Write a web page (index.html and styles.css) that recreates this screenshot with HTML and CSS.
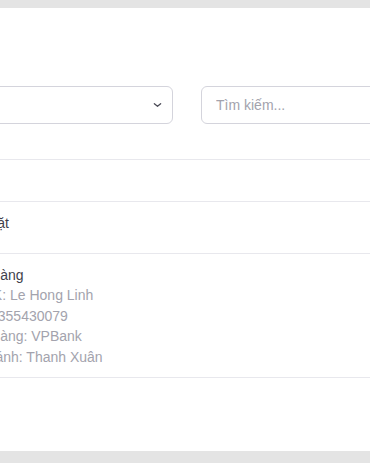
FILE: index.html
```html
<!DOCTYPE html>
<html lang="vi">
<head>
    <meta charset="UTF-8">
    <meta name="viewport" content="width=device-width, initial-scale=1.0">
    <title>Phương thức thanh toán</title>
    <link rel="stylesheet" href="styles.css">
</head>
<body>
    <div class="page">
        <div class="card">
            <div class="filters">
                <div class="select">
                    <span class="select-value">Tất cả phương thức</span>
                    <svg class="chevron" viewBox="0 0 10 6" width="9" height="6">
                        <path d="M1.5 1.5l3.5 3 3.5-3" />
                    </svg>
                </div>
                <input class="search" type="text" placeholder="Tìm kiếm...">
            </div>

            <div class="table">
                <div class="row row-head">
                    <div class="cell">#</div>
                    <div class="cell">Tên</div>
                </div>
                <div class="row row-short">
                    <div class="cell">1</div>
                    <div class="cell">
                        <div class="title">Tiền mặt</div>
                    </div>
                </div>
                <div class="row">
                    <div class="cell">2</div>
                    <div class="cell">
                        <div class="title">Ngân hàng</div>
                        <div class="detail">Chủ TK: Le Hong Linh</div>
                        <div class="detail">STK: 0355430079</div>
                        <div class="detail">Ngân hàng: VPBank</div>
                        <div class="detail">Chi nhánh: Thanh Xuân</div>
                    </div>
                </div>
            </div>
        </div>
    </div>
</body>
</html>
```

FILE: styles.css
```css
* {
    margin: 0;
    padding: 0;
    box-sizing: border-box;
}

body {
    font-family: 'Liberation Sans', Arial, sans-serif;
    font-size: 14px;
    background: #e4e4e4;
    overflow: hidden;
    height: 463px;
}

.page {
    padding-top: 8px;
}

.card {
    background: white;
    margin-left: -240px;
    width: 820px;
    height: 443px;
    padding: 78px 24px 0;
}

.filters {
    display: flex;
    gap: 28px;
}

.select {
    flex: 0 0 389px;
    height: 38px;
    border: 1px solid #d4d4dc;
    border-radius: 6px;
    display: flex;
    align-items: center;
    justify-content: space-between;
    padding: 0 10px 0 14px;
    color: #3f3f4c;
}

.chevron {
    fill: none;
    stroke: #4b4b57;
    stroke-width: 1.4;
    stroke-linecap: round;
    stroke-linejoin: round;
}

.search {
    flex: 0 0 320px;
    height: 38px;
    border: 1px solid #d4d4dc;
    border-radius: 6px;
    padding: 0 14px;
    font-family: inherit;
    font-size: 14px;
    color: #3f3f4c;
    outline: none;
}

.search::placeholder {
    color: #a3a3ad;
}

.table {
    margin-top: 35px;
    border-top: 1px solid #e8e8ed;
}

.row {
    display: grid;
    grid-template-columns: 155px 1fr;
    border-bottom: 1px solid #e8e8ed;
    line-height: 20.4px;
    color: #3f3f4c;
}

.row-head {
    height: 42px;
    align-items: center;
}

.row-short {
    height: 52px;
}

.cell {
    padding: 11px 16px 10px;
}

.row-head .cell {
    padding: 0 16px;
}

.title {
    color: #3f3f4c;
}

.detail {
    color: #a3a3ad;
}
```
